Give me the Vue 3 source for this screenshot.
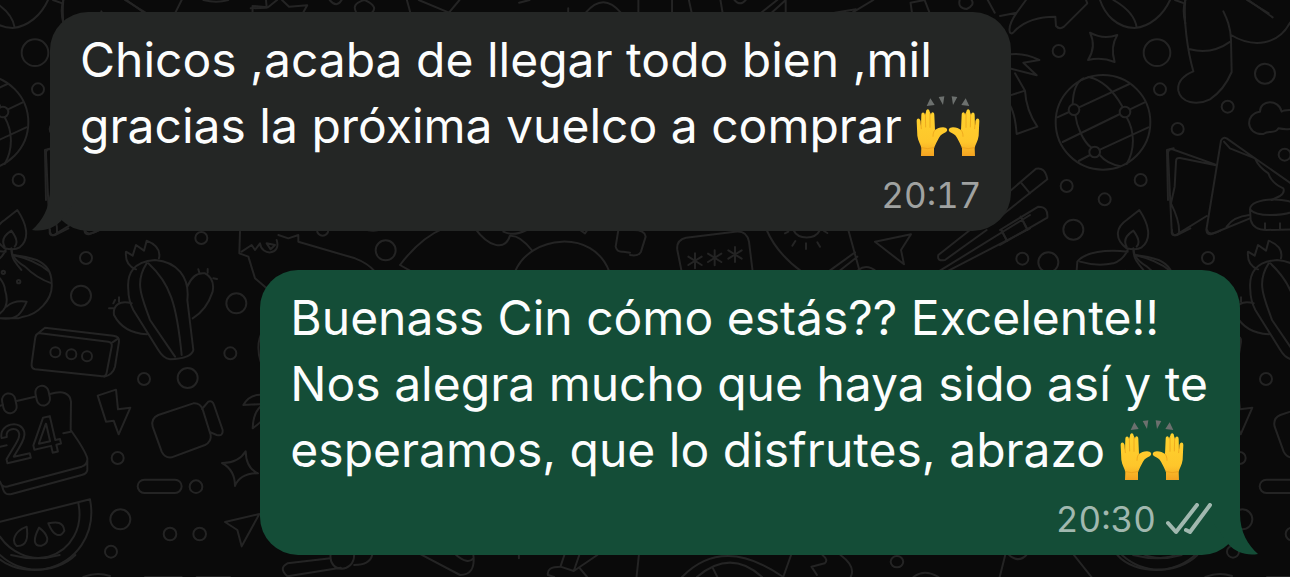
<script setup>
const messages = [
  {
    id: 1,
    side: 'in',
    lines: ['Chicos ,acaba de llegar todo bien ,mil', 'gracias la próxima vuelco a comprar'],
    time: '20:17',
  },
  {
    id: 2,
    side: 'out',
    lines: [
      'Buenass Cin cómo estás?? Excelente!!',
      'Nos alegra mucho que haya sido así y te',
      'esperamos, que lo disfrutes, abrazo',
    ],
    time: '20:30',
  },
]
</script>

<template>
  <main class="chat">
    <svg class="wallpaper" viewBox="0 0 1290 577" preserveAspectRatio="xMinYMin slice" aria-hidden="true">
      <defs>
        <linearGradient id="skin" x1="0" y1="0" x2="0" y2="1">
          <stop offset="0" stop-color="#ffd32e" />
          <stop offset="0.7" stop-color="#fec62b" />
          <stop offset="1" stop-color="#f4a321" />
        </linearGradient>
        <g id="hand">
          <path
            fill="url(#skin)"
            d="M18 183L19 158C17 148 9 138 7 122L5 78C5 69 14 68 16 77L18 92L19 60C19 50 29 50 30 60L33 51C33 40 43 40 44 50L48 59C49 49 58 50 58 60L60 105C66 101 74 97 84 97C96 97 101 106 92 112C84 116 78 118 72 128C66 139 61 149 57 159L57 183Z"
          />
          <path
            fill="none"
            stroke="#e79a18"
            stroke-width="2"
            stroke-linecap="round"
            d="M17 78L19 101M31 58L32 96M45 55L45 97M60 105C55 110 54 117 54 124M19 158Q38 164 57 158"
          />
          <path fill="#6c706e" d="M46 10L59 30L35 33ZM71 6L88 4L84 30Z" />
        </g>
        <g id="tile">
          <g transform="translate(1000 0) scale(.33333)">
            <path d="M0 48L50 38L78 0M50 38C35 60 25 85 30 98Q36 104 44 93Q85 50 166 50L168 78Q178 90 192 80L262 10L258 0M300 0C315 45 350 82 404 84C450 80 490 45 510 0M340 0C375 20 405 45 410 83M525 0L553 10M556 0C550 60 562 150 580 214Q530 235 535 272C542 308 590 318 630 298Q672 270 695 216L693 120C692 80 680 55 670 34M570 148Q635 165 692 124M693 105C760 145 835 135 870 68M745 0L818 52" />
            <path d="M270 98Q310 120 352 105Q330 140 344 186Q305 170 264 180Q290 140 270 98Z" />
            <circle cx="176" cy="153" r="18" /><circle cx="471" cy="158" r="40" /><circle cx="480" cy="268" r="18" />
            <circle cx="795" cy="221" r="30" /><circle cx="683" cy="320" r="18" /><circle cx="533" cy="387" r="18" />
            <circle cx="854" cy="464" r="18" /><circle cx="422" cy="540" r="18" /><circle cx="200" cy="558" r="18" />
            <circle cx="314" cy="598" r="18" /><circle cx="220" cy="689" r="30" /><circle cx="67" cy="776" r="18" />
            <circle cx="145" cy="787" r="30" /><circle cx="624" cy="774" r="18" />
            <path d="M20 165Q65 155 118 180L70 188L110 226L28 205M45 220L75 272L28 287M75 272Q78 330 112 380L50 402Q45 335 26 310" />
            <circle cx="309" cy="367" r="142" />
            <circle cx="222" cy="329" r="16" /><circle cx="375" cy="336" r="16" /><circle cx="284" cy="456" r="16" />
            <path d="M172 352L207 336M237 322L388 252M188 426L360 342M390 328L434 307M236 483L270 465M300 449L445 382M218 313Q220 250 250 235M265 231C310 240 345 280 368 321M226 345C230 380 250 425 274 443M298 464C315 485 340 495 362 499M380 352C405 395 405 450 380 492" />
            <path d="M20 582L108 506Q135 500 142 538L0 650M65 550L90 580M0 690L115 620Q145 620 142 653L0 735M65 655L82 690M5 690L20 722" />
            <path d="M380 745C340 715 350 680 380 660L418 630C445 670 458 715 425 742Q410 752 380 745ZM380 740Q365 715 400 692Q425 725 410 740M400 745C400 775 410 785 430 810M383 750Q370 780 340 790Q290 800 240 785M230 812L232 785C255 755 320 748 383 755M405 765Q470 780 510 812" />
            <path d="M645 493L515 447Q503 448 504 462L515 690Q517 710 530 704L620 648M648 496L540 474Q528 472 528 485L524 560L513 610M513 610Q540 665 537 698M663 422L619 690Q620 705 635 702L750 655M663 422Q668 410 680 415L755 468L880 555M672 425L690 445L765 475Q775 500 805 520Q815 550 850 565Q855 578 840 588L815 600M680 680Q700 650 748 645" />
            <path d="M750 628C750 590 880 590 890 620Q885 645 810 645Q765 645 750 628L752 660Q760 690 800 690L880 688M795 670V686M840 670V686" />
            <path d="M880 330Q850 330 845 335C835 295 780 300 780 335C735 340 735 405 790 402Q800 395 812 396Q830 395 835 385Q860 390 880 385" />
          </g>
          <g transform="scale(.33333)">
            <circle cx="257" cy="887" r="0" />
            <circle cx="243" cy="887" r="30" /><circle cx="604" cy="714" r="18" />
            <path d="M190 0Q180 30 190 70M375 0L440 40M545 0L525 40M610 0Q650 10 685 0M752 25L800 23L798 0M138 600L135 450L155 445M150 690Q145 710 165 705L205 685M255 690Q260 710 295 692" />
            <path d="M35 750C35 770 50 785 75 800Q110 835 155 850Q155 800 110 780Q80 770 40 765M155 850C160 900 110 945 70 950L55 955L0 955M0 835Q15 855 15 870C25 900 20 925 0 940M20 920Q40 900 80 905Q70 930 55 945Q35 960 0 955" />
            <circle cx="10" cy="817" r="5" /><circle cx="56" cy="845" r="5" />
            <path d="M408 808C385 800 375 785 378 755L398 767L408 735L432 752L440 722Q485 740 477 775M385 870C380 820 400 785 465 780C530 785 570 830 562 900L580 1050Q575 1075 510 1078Q490 1075 475 1050L400 930Q385 900 385 870M440 790C400 850 430 900 450 960L525 1070M445 790C510 850 530 910 545 1065M562 860Q580 815 615 820Q645 835 638 875Q620 930 578 955M395 910C360 900 338 915 342 945C360 980 390 1000 440 1003M595 808L598 818M623 807V818M640 835L651 837M340 910L345 900M357 905V892M327 925H340" />
            <path d="M720 695L718 760L745 770L765 835L800 865M725 755L755 735L765 750L780 730C785 770 845 765 830 720M800 730L825 735L812 748Z" />
          </g>
          <g transform="translate(0 290) scale(.33333)">
            <circle cx="709" cy="40" r="30" /><circle cx="691" cy="190" r="18" /><circle cx="432" cy="267" r="18" />
            <circle cx="563" cy="264" r="30" /><circle cx="353" cy="504" r="18" /><circle cx="588" cy="590" r="19" />
            <circle cx="361" cy="688" r="30" /><circle cx="510" cy="732" r="19" /><circle cx="599" cy="732" r="19" /><circle cx="333" cy="785" r="18" />
            <path d="M120 130L325 155Q338 158 335 170L320 248Q318 262 300 258L105 238Q93 235 95 220L105 148Q107 128 120 130ZM108 135L135 113L340 137Q360 140 357 155L345 230Q338 255 312 260M333 160L355 145" />
            <circle cx="166" cy="187" r="15" /><circle cx="214" cy="193" r="15" /><circle cx="261" cy="199" r="15" />
            <path d="M0 347L8 345M50 333L105 320M150 312C190 300 210 310 213 335L212 420Q255 480 262 505L262 540Q260 552 245 555L35 612Q12 618 7 590L0 575M212 425L190 430M0 470L20 466M5 585Q15 595 30 587L245 530Q260 525 262 510" />
            <rect x="8" y="310" width="40" height="60" rx="20" transform="rotate(-12 28 340)" />
            <rect x="108" y="287" width="40" height="60" rx="20" transform="rotate(-12 128 317)" />
            <text x="12" y="522" transform="rotate(-13 12 522)">24</text>
            <path d="M293 317L348 299L354 358L391 353L356 433L341 392L318 395Z" />
            <path d="M475 375L580 340Q600 338 608 358L632 435Q635 455 615 465L515 502Q495 505 485 485L458 410Q452 385 475 375ZM606 357L625 335Q637 330 642 345L668 420Q670 440 650 435L632 427" />
            <path d="M790 120Q765 160 782 215M730 345Q750 310 790 315M730 345L790 342M790 345Q760 360 758 415Q785 395 790 385" />
            <path d="M666 519Q715 520 737 484Q738 535 774 550Q720 550 705 588Q705 540 666 519ZM675 696L778 672L725 769L712 720Z" />
            <rect x="413" y="569" width="132" height="40" rx="20" />
            <path d="M0 695L270 628C290 730 230 820 130 838Q55 845 0 795M235 640C250 710 215 780 145 800C90 815 30 785 0 740M80 710C40 725 35 755 50 768C80 770 85 745 80 710ZM117 713C95 755 105 770 125 767C155 755 140 730 117 713ZM145 700C160 738 180 745 193 722C190 695 170 695 145 700Z" />
            <path d="M250 861Q290 845 330 858M435 861H545M590 861H690" />
          </g>
          <g transform="translate(230 215) scale(.33333)">
            <circle cx="467" cy="106" r="30" /><circle cx="278" cy="45" r="17" />
            <path d="M145 60L175 70L205 60L205 80L375 130Q415 145 435 170M400 40Q430 55 455 40M640 40Q570 70 510 150L545 170M735 40C775 95 825 110 840 62Q870 60 905 105M855 170C900 60 1090 40 1138 170M820 50Q850 65 890 45M1050 45L1065 55L1072 45M1165 45L1157 95Q1160 112 1180 110L1200 113" />
          </g>
          <g transform="translate(630 215) scale(.33333)">
            <path d="M0 120Q25 125 33 110L47 65Q45 45 10 45M155 170L142 105Q138 75 168 68L315 50Q350 45 357 80L368 170M410 45Q440 115 515 170M655 45L688 165M595 170L675 112M625 170L682 125M735 80L843 58L813 105L822 148ZM925 120L1020 45M925 120Q920 140 945 135L1070 45M925 170L1200 0M950 170L1200 40M1113 45L1132 78M1172 5L1190 38M490 45C505 75 555 75 570 45M465 55L475 50M487 92L496 78M528 85V102M570 95L562 82M592 54L582 48M685 165Q710 145 740 170" />
            <path d="M195 115V160M175 125L215 150M175 150L215 125M254 106V151M234 116L274 141M234 141L274 116M315 96V141M295 106L335 131M295 131L335 106" />
          </g>
          <g transform="scale(.7015 .33333)">
            <path d="M360 38V18L382 22L395 0M402 0L412 20L438 16L432 38M470 0Q480 25 487 0M508 38Q500 10 520 0Q540 20 530 38M580 0L585 38M597 0L640 38L655 0M740 8L755 0M810 25V38M835 38Q860 -25 885 38M910 0V38M958 38V0M982 0L986 38M1027 0L1030 38M1047 0Q1055 20 1063 0M1085 38L1108 0M1100 38L1120 0V38M1215 38L1245 0M1190 38L1220 28M1300 38L1298 8L1318 0L1325 38M1368 0Q1365 25 1378 27Q1390 15 1385 0M1408 0L1418 38" />
          </g>
          <g transform="translate(60 535) scale(.7844 .33333)">
            <path d="M345 70L290 85Q278 100 290 124L358 98M345 58C342 115 375 115 375 60M375 90Q395 90 398 60M460 58L510 120Q530 120 527 60M505 60Q520 90 527 70M585 58V70M643 60L638 95Q620 95 622 120L630 126M638 95L655 108L662 60M655 108L685 60M662 98L672 126M738 60L735 126M793 126Q845 0 922 126M812 126Q855 40 895 126M832 98L838 126M932 60L922 126M972 60Q980 75 975 85L958 95L965 120M995 60Q1015 95 1008 126M1088 126Q1102 100 1120 126M1205 60L1198 126M1292 58L1315 126M1210 60Q1222 85 1232 60M1348 60C1370 120 1425 120 1450 60M1368 60Q1400 80 1430 60" />
            <ellipse cx="1067" cy="80" rx="8" ry="17" />
          </g>
        </g>
      </defs>
      <g class="doodles">
        <use href="#tile" />
        <use href="#tile" x="-1122" />
        <use href="#tile" x="1122" />
      </g>
    </svg>

    <article v-for="m in messages" :key="m.id" class="bubble" :class="m.side">
      <svg class="tail" viewBox="0 0 44 41" aria-hidden="true">
        <path d="M18 0C18 18 10 31 0 40C12 42 22 38 29 31L44 10V0Z" />
      </svg>
      <p class="text">
        <span v-for="(line, i) in m.lines" :key="line" class="line">{{ line + ' ' }}<svg
          v-if="i === m.lines.length - 1"
          class="emoji"
          viewBox="0 0 198 186"
          role="img"
          aria-label="🙌"
        >
          <use href="#hand" />
          <use href="#hand" transform="translate(198 0) scale(-1 1)" />
        </svg></span>
      </p>
      <footer class="meta">
        <time>{{ m.time }}</time>
        <svg v-if="m.side === 'out'" class="ticks" viewBox="0 0 46 32" role="img" aria-label="Entregado">
          <path d="M2 20L10 29L31 2M20 27L24 29L44 2" />
        </svg>
      </footer>
    </article>
  </main>
</template>

<style>
body {
  background: #0a0a0a;
}
</style>

<style scoped>
.chat {
  position: relative;
  box-sizing: border-box;
  min-height: 100vh;
  padding: 12px 50px 22px;
  display: flex;
  flex-direction: column;
  gap: 39px;
  overflow: hidden;
  background: #0a0a0a;
  font-family: Inter, "Liberation Sans", sans-serif;
}

.wallpaper {
  position: absolute;
  inset: 0;
  width: 100%;
  height: 100%;
}

.doodles {
  fill: none;
  stroke: #242424;
  stroke-width: 2;
  stroke-linecap: round;
  stroke-linejoin: round;
}

#tile :is(path, circle, rect, ellipse, text) {
  stroke-width: 2px;
  vector-effect: non-scaling-stroke;
}

#tile text {
  font-family: Inter, sans-serif;
  font-size: 150px;
  font-weight: 500;
}

.bubble {
  position: relative;
  box-sizing: border-box;
  max-width: 100%;
  padding: 15px 30px 16px;
  border-radius: 38px;
  color: #fcfdfd;
}

.in {
  align-self: flex-start;
  background: #242625;
}

.out {
  align-self: flex-end;
  padding-right: 28px;
  background: #144d37;
}

.tail {
  position: absolute;
  bottom: 0;
  left: -18px;
  width: 44px;
  height: 41px;
  fill: #242625;
}

.out .tail {
  left: auto;
  right: -18px;
  transform: scaleX(-1);
  fill: #144d37;
}

.text {
  margin: 0;
  font-size: 48px;
  line-height: 66px;
}

.out .text {
  padding-right: 4px;
}

.line {
  display: block;
}

.emoji {
  width: 66px;
  height: 62px;
  vertical-align: -14px;
}

.meta {
  display: flex;
  justify-content: flex-end;
  align-items: center;
  gap: 10px;
  margin-top: 16px;
  font-size: 35px;
  font-variant-numeric: tabular-nums;
  line-height: 40px;
  color: #a0a2a1;
}

.out .meta {
  color: #a1b8af;
}

.ticks {
  width: 46px;
  height: 32px;
  fill: none;
  stroke: currentColor;
  stroke-width: 4;
  stroke-linecap: round;
  stroke-linejoin: round;
}
</style>
